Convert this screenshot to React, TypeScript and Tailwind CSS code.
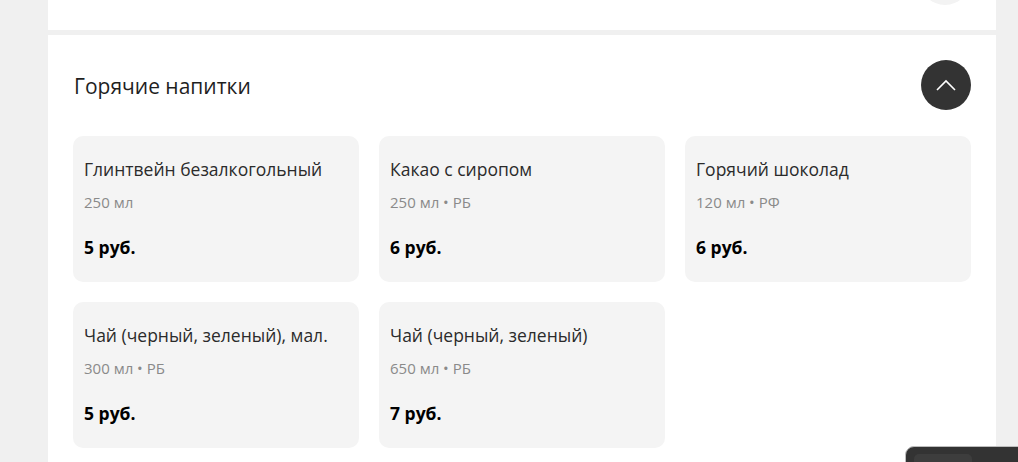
import React from 'react';

type Drink = {
    name: string;
    info: string;
    price: string;
};

const drinks: Drink[] = [
    { name: 'Глинтвейн безалкогольный', info: '250 мл', price: '5 руб.' },
    { name: 'Какао с сиропом', info: '250 мл • РБ', price: '6 руб.' },
    { name: 'Горячий шоколад', info: '120 мл • РФ', price: '6 руб.' },
    { name: 'Чай (черный, зеленый), мал.', info: '300 мл • РБ', price: '5 руб.' },
    { name: 'Чай (черный, зеленый)', info: '650 мл • РБ', price: '7 руб.' },
];

function DrinkCard({ drink }: { drink: Drink }) {
    return (
        <div className="h-[146px] rounded-[10px] bg-[#f4f4f4] px-[11px] pt-[21px]">
            <p className="text-[17.5px] leading-[24px] text-[#2b2b2b]">
                {drink.name}
            </p>
            <p className="mt-[11px] text-[15px] leading-[20px] text-[#8a8a8a]">
                {drink.info}
            </p>
            <p className="mt-[24px] text-[17.5px] leading-[22px] font-bold text-black">
                {drink.price}
            </p>
        </div>
    );
}

export default function App() {
    return (
        <div className="relative h-[462px] overflow-hidden bg-[#f0f0f0] font-['Open_Sans','Noto_Sans',sans-serif]">
            <div className="ml-[48px] w-[948px]">
                {/* предыдущая секция */}
                <div className="relative h-[30px] overflow-hidden bg-white">
                    <div className="absolute left-[872px] top-[-45px] h-[50px] w-[50px] rounded-full bg-[#f3f3f3]" />
                </div>

                <section className="mt-[5px] h-[427px] bg-white px-[25px] pt-[25px]">
                    <div className="flex h-[50px] items-center justify-between pl-[1px]">
                        <h2 className="pt-[3px] text-[21px] text-[#1f1f1f]">Горячие напитки</h2>
                        <button className="flex h-[50px] w-[50px] items-center justify-center rounded-full bg-[#333333]">
                            <svg width="20" height="12" viewBox="0 0 20 12" fill="none">
                                <path d="M1 11 L10 2 L19 11" stroke="white" strokeWidth="1.6" />
                            </svg>
                        </button>
                    </div>

                    <div className="mt-[26px] grid grid-cols-3 gap-x-[20px] gap-y-[20px]">
                        {drinks.map(drink => (
                            <DrinkCard key={drink.name} drink={drink} />
                        ))}
                    </div>
                </section>
            </div>

            {/* плавающий виджет */}
            <div className="absolute left-[905px] top-[446px] h-[40px] w-[140px] rounded-tl-[9px] border border-[#bdbdbd] bg-[#333333] pl-[8px] pt-[7px]">
                <div className="h-[30px] w-[58px] rounded-[5px] bg-[#3d3d3d]" />
            </div>
        </div>
    );
}
